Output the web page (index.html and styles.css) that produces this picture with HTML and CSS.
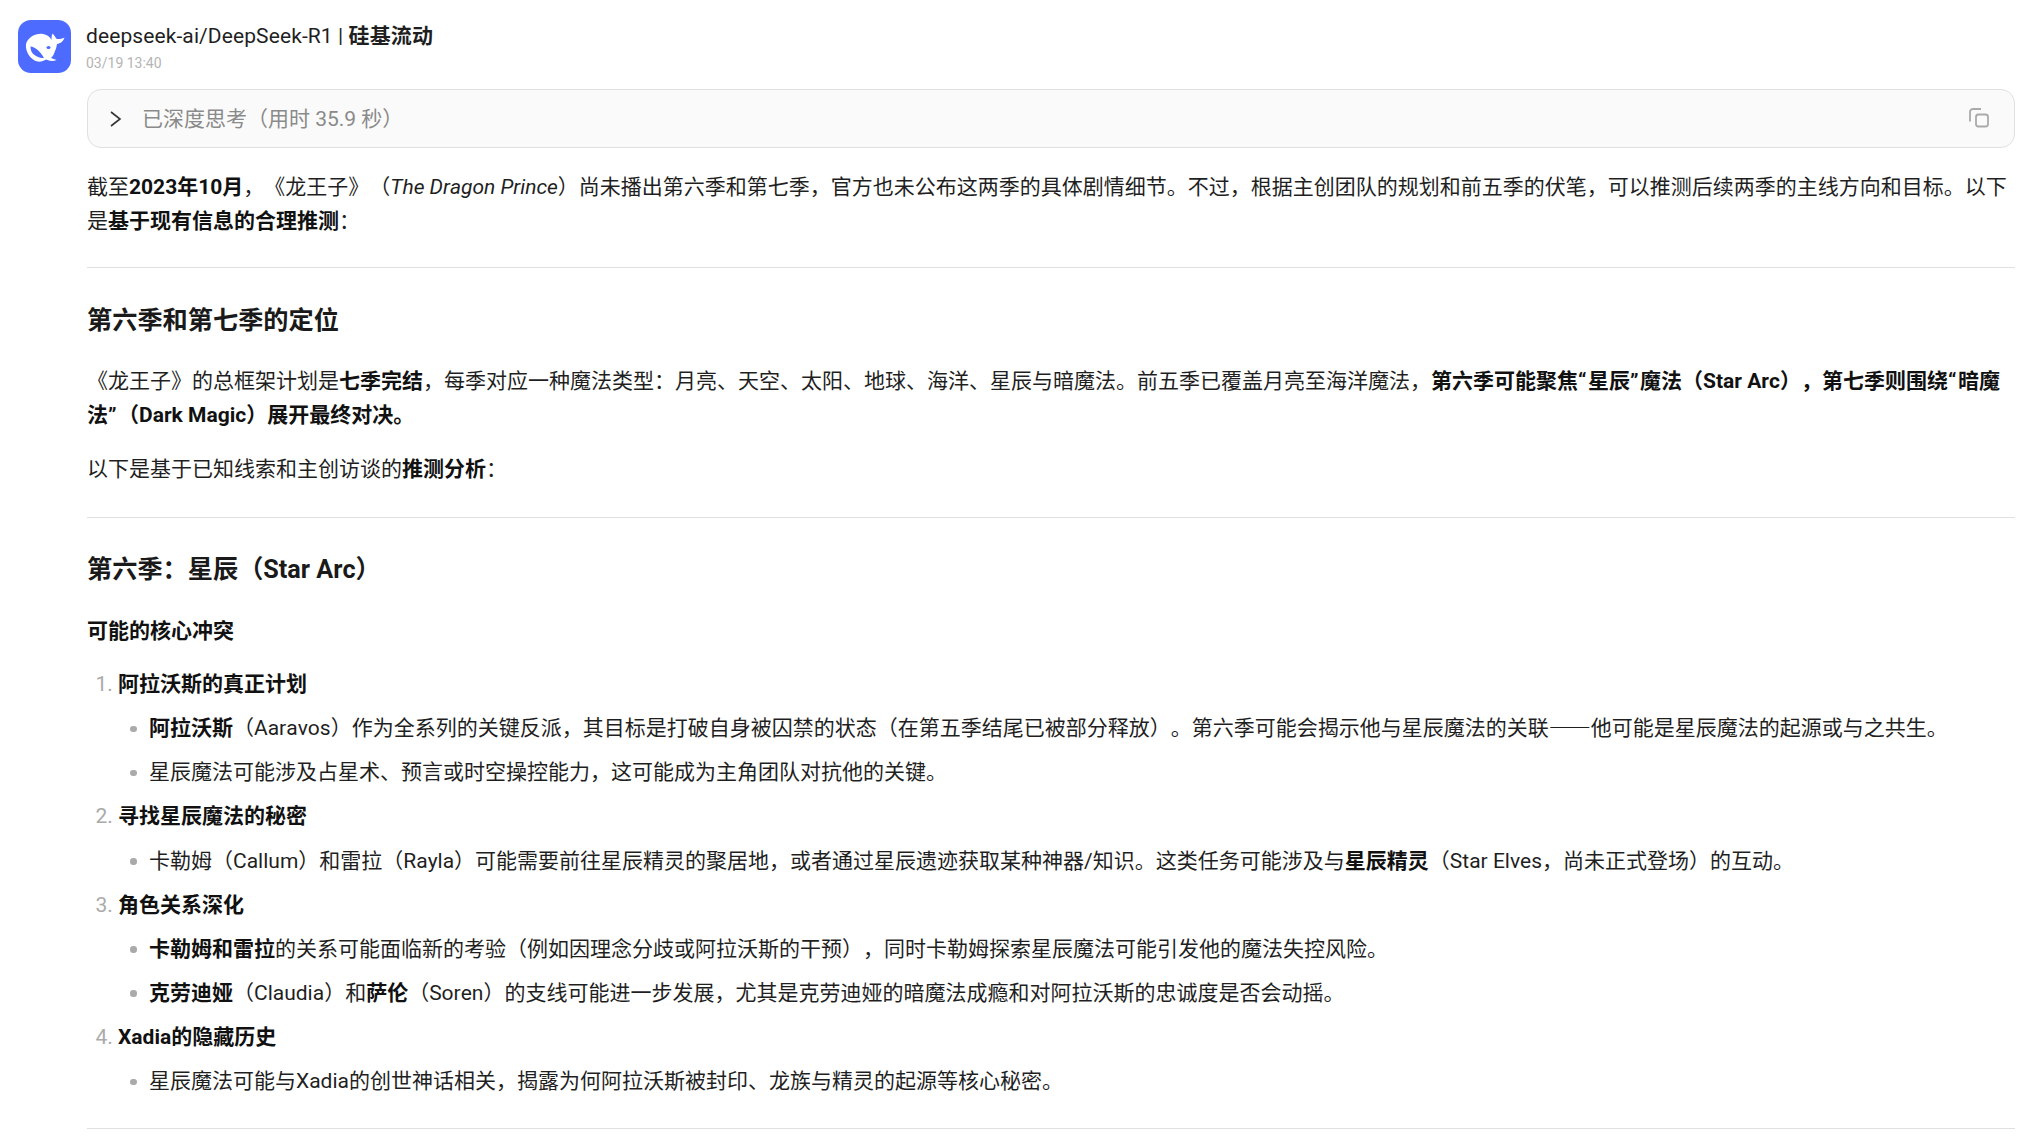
FILE: index.html
```html
<!DOCTYPE html>
<html lang="zh-CN">
<head>
<meta charset="utf-8">
<title>DeepSeek-R1</title>
<link rel="stylesheet" href="styles.css">
</head>
<body>
<div class="message">
  <div class="avatar">
    <svg viewBox="0 0 53 53" width="53" height="53">
      <path class="whale" d="M8 24C10 17 18 13 25 14C29 14.500 32 17 33.500 20C33.500 18 33.500 15.500 34.500 13.500C36 15 37.500 17 38 18.500C40.500 19.500 43.500 19 46.500 17.500C45.500 21 42.500 23.500 39 24C38.500 27 38 29 37 31C36 34 35 36 33 38L38.500 40C35 41.500 31 41 28 39.500C26 41 22.500 42 19.500 41.500C13 40 7 32 8 24Z"/>
      <path class="whale-cut" d="M12.500 26.500C17 27 22 31 26 38C21 38 16.500 36 14 32.500C13 31 12.500 28.500 12.500 26.500Z"/>
      <ellipse class="whale-cut" cx="30.500" cy="27.500" rx="2" ry="1.600"/>
    </svg>
  </div>
  <div class="main">
    <header class="head">
      <div class="title">deepseek-ai/DeepSeek-R1 | <b>硅基流动</b></div>
      <div class="time">03/19 13:40</div>
    </header>
    <div class="thinking">
      <svg class="chev" viewBox="0 0 12 18" width="12" height="18"><path d="M1 2l9 7-9 7"/></svg>
      <span class="think-text">已深度思考（用时 35.9 秒）</span>
      <svg class="copy" viewBox="0 0 20 20" width="20" height="20"><rect x="7" y="6.500" width="12" height="12" rx="2.500"/><path d="M1 13.500V4c0-2 1.500-3 3-3h8"/></svg>
    </div>
    <article class="md">
      <p>截至<b>2023年10月</b>，《龙王子》（<i>The Dragon Prince</i>）尚未播出第六季和第七季，官方也未公布这两季的具体剧情细节。不过，根据主创团队的规划和前五季的伏笔，可以推测后续两季的主线方向和目标。以下是<b>基于现有信息的合理推测</b>：</p>
      <hr>
      <h2>第六季和第七季的定位</h2>
      <p>《龙王子》的总框架计划是<b>七季完结</b>，每季对应一种魔法类型：月亮、天空、太阳、地球、海洋、星辰与暗魔法。前五季已覆盖月亮至海洋魔法，<b>第六季可能聚焦<span class="q">“</span>星辰<span class="q">”</span>魔法（Star Arc），第七季则围绕<span class="q">“</span>暗魔法<span class="q">”</span>（Dark Magic）展开最终对决。</b></p>
      <p>以下是基于已知线索和主创访谈的<b>推测分析</b>：</p>
      <hr>
      <h2 class="h2-tight">第六季：星辰（Star Arc）</h2>
      <h3>可能的核心冲突</h3>
      <ol>
        <li><b>阿拉沃斯的真正计划</b>
          <ul>
            <li><b>阿拉沃斯</b>（Aaravos）作为全系列的关键反派，其目标是打破自身被囚禁的状态（在第五季结尾已被部分释放）。第六季可能会揭示他与星辰魔法的关联<span class="dash">——</span>他可能是星辰魔法的起源或与之共生。</li>
            <li>星辰魔法可能涉及占星术、预言或时空操控能力，这可能成为主角团队对抗他的关键。</li>
          </ul>
        </li>
        <li><b>寻找星辰魔法的秘密</b>
          <ul>
            <li>卡勒姆（Callum）和雷拉（Rayla）可能需要前往星辰精灵的聚居地，或者通过星辰遗迹获取某种神器/知识。这类任务可能涉及与<b>星辰精灵</b>（Star Elves，尚未正式登场）的互动。</li>
          </ul>
        </li>
        <li><b>角色关系深化</b>
          <ul>
            <li><b>卡勒姆和雷拉</b>的关系可能面临新的考验（例如因理念分歧或阿拉沃斯的干预），同时卡勒姆探索星辰魔法可能引发他的魔法失控风险。</li>
            <li><b>克劳迪娅</b>（Claudia）和<b>萨伦</b>（Soren）的支线可能进一步发展，尤其是克劳迪娅的暗魔法成瘾和对阿拉沃斯的忠诚度是否会动摇。</li>
          </ul>
        </li>
        <li><b>Xadia的隐藏历史</b>
          <ul>
            <li>星辰魔法可能与Xadia的创世神话相关，揭露为何阿拉沃斯被封印、龙族与精灵的起源等核心秘密。</li>
          </ul>
        </li>
      </ol>
      <hr>
    </article>
  </div>
</div>
</body>
</html>
```
FILE: styles.css
```css
html, body { margin: 0; padding: 0; background: #fff; height: 100%; overflow: hidden; }
body {
  font-family: Roboto, "Noto Sans CJK SC", sans-serif;
  font-size: 21px;
  line-height: 33.600px;
  color: #1f1f1f;
  text-spacing-trim: space-all;
  font-kerning: none;
}
.message { display: flex; gap: 15px; padding: 20px 25px 0 18px; }
.avatar { width: 53px; height: 53px; flex: none; border-radius: 13px; background: #4d6bfe; overflow: hidden; }
.avatar svg { display: block; }
.whale { fill: #fff; }
.whale-cut { fill: #4d6bfe; }
.main { flex: 1; min-width: 0; }
.head { height: 56px; margin-top: 0; margin-bottom: 13px; }
.title { font-size: 21px; line-height: 33px; color: #1f1f1f; letter-spacing: .1px; }
.time { font-size: 14px; line-height: 22px; margin-top: -1px; color: #b4b4b4; }
.thinking {
  display: flex; align-items: center; height: 59px; box-sizing: border-box;
  margin: 0 0 0 1px; padding: 0 25px 0 22px; border: 1px solid #e0e0e0; border-radius: 14px; background: #fafafa;
}
.chev { fill: none; stroke: #333; stroke-width: 1.600; margin-right: 20px; }
.think-text { flex: 1; color: #8a8a8a; font-size: 21px; padding-top: 2px; }
.copy { fill: none; stroke: #aaa; stroke-width: 1.800; margin-bottom: 2px; }
.md { margin-top: 23px; margin-left: 1px; }
.md p { margin: 0 0 21px; }
.md b { font-weight: 700; color: #111; }
.q { letter-spacing: 1.500px; }
.dash { font-family: "Noto Sans CJK SC", sans-serif; line-height: 0; }
.md hr { border: 0; border-top: 1px solid #e0e0e0; margin: 29px 0 0; }
.md h2 { font-size: 25.200px; line-height: 36px; font-weight: 700; margin: 35px 0 26px; color: #1a1a1a; }
.md p + hr { margin-top: 30px; }
.md p:first-child + hr { margin-top: 29px; }
.md .h2-tight { margin: 34px 0 27px; }
.md h3 { font-size: 21px; line-height: 33.600px; font-weight: 700; margin: 0 0 19.600px; color: #111; }
ol, ul { margin: 0; }
ol { padding-left: 31px; }
ol > li { margin-bottom: 10.500px; }
ol > li::marker { color: #aaa; }
ul { padding-left: 31px; margin-top: 10.500px; list-style: none; }
ul > li { margin-bottom: 10.500px; position: relative; }
ul > li::before {
  content: ""; position: absolute; left: -19px; top: 13.500px;
  width: 6.500px; height: 6.500px; border-radius: 50%; background: #aaa;
}
ul > li:last-child { margin-bottom: 0; }
```
